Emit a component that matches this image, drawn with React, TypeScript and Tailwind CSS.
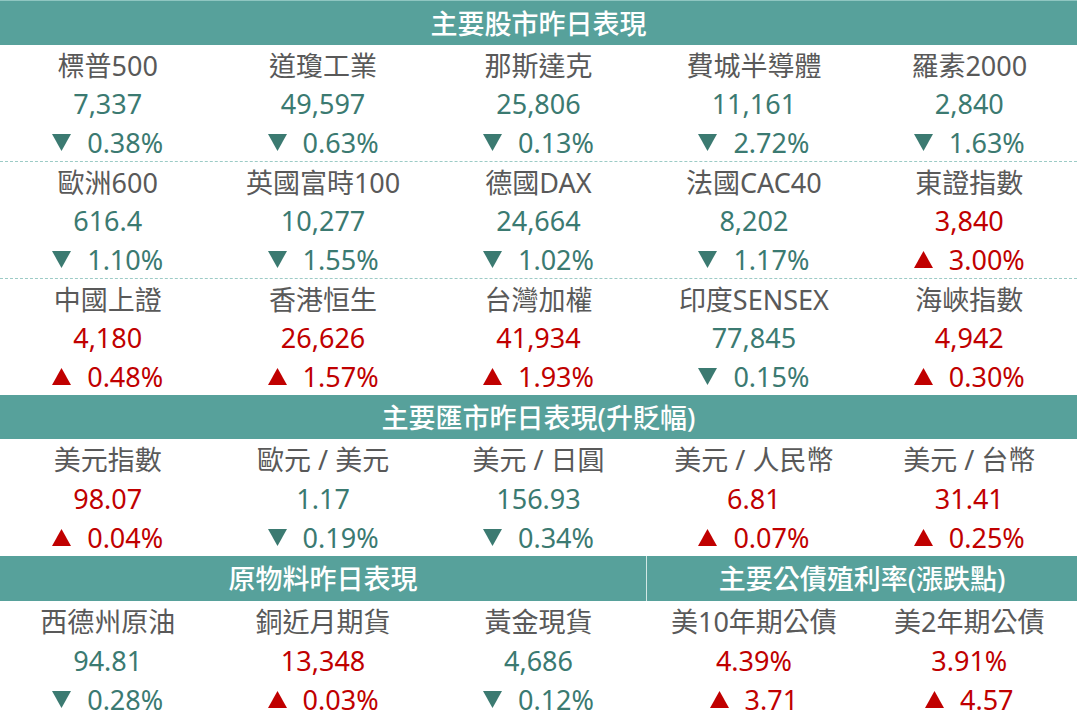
type Dir = 'up' | 'down';

interface Quote {
  name: string;
  value: string;
  change: string;
  dir: Dir;
}

const stockGroups: Quote[][] = [
  [
    { name: '標普500', value: '7,337', change: '0.38%', dir: 'down' },
    { name: '道瓊工業', value: '49,597', change: '0.63%', dir: 'down' },
    { name: '那斯達克', value: '25,806', change: '0.13%', dir: 'down' },
    { name: '費城半導體', value: '11,161', change: '2.72%', dir: 'down' },
    { name: '羅素2000', value: '2,840', change: '1.63%', dir: 'down' },
  ],
  [
    { name: '歐洲600', value: '616.4', change: '1.10%', dir: 'down' },
    { name: '英國富時100', value: '10,277', change: '1.55%', dir: 'down' },
    { name: '德國DAX', value: '24,664', change: '1.02%', dir: 'down' },
    { name: '法國CAC40', value: '8,202', change: '1.17%', dir: 'down' },
    { name: '東證指數', value: '3,840', change: '3.00%', dir: 'up' },
  ],
  [
    { name: '中國上證', value: '4,180', change: '0.48%', dir: 'up' },
    { name: '香港恒生', value: '26,626', change: '1.57%', dir: 'up' },
    { name: '台灣加權', value: '41,934', change: '1.93%', dir: 'up' },
    { name: '印度SENSEX', value: '77,845', change: '0.15%', dir: 'down' },
    { name: '海峽指數', value: '4,942', change: '0.30%', dir: 'up' },
  ],
];

const fxRow: Quote[] = [
  { name: '美元指數', value: '98.07', change: '0.04%', dir: 'up' },
  { name: '歐元 / 美元', value: '1.17', change: '0.19%', dir: 'down' },
  { name: '美元 / 日圓', value: '156.93', change: '0.34%', dir: 'down' },
  { name: '美元 / 人民幣', value: '6.81', change: '0.07%', dir: 'up' },
  { name: '美元 / 台幣', value: '31.41', change: '0.25%', dir: 'up' },
];

const lastRow: Quote[] = [
  { name: '西德州原油', value: '94.81', change: '0.28%', dir: 'down' },
  { name: '銅近月期貨', value: '13,348', change: '0.03%', dir: 'up' },
  { name: '黃金現貨', value: '4,686', change: '0.12%', dir: 'down' },
  { name: '美10年期公債', value: '4.39%', change: '3.71', dir: 'up' },
  { name: '美2年期公債', value: '3.91%', change: '4.57', dir: 'up' },
];

function Arrow({ dir }: { dir: Dir }) {
  return (
    <svg width="19" height="17" viewBox="0 0 19 17" className="mr-[16px] shrink-0">
      {dir === 'up' ? (
        <polygon points="9.5,0 19,17 0,17" fill="#c00000" />
      ) : (
        <polygon points="0,0 19,0 9.5,17" fill="#3b7a71" />
      )}
    </svg>
  );
}

function Cell({ q }: { q: Quote }) {
  const color = q.dir === 'up' ? 'text-[#c00000]' : 'text-[#3b7a71]';
  return (
    <div className="flex flex-col h-full">
      <div className="flex-1 flex items-center justify-center pt-[2px] text-[#595959]">{q.name}</div>
      <div className={`flex-1 flex items-center justify-center pt-[2px] ${color}`}>{q.value}</div>
      <div className={`flex-1 flex items-center justify-center pt-[3px] ${color}`}>
        <Arrow dir={q.dir} />
        <span>{q.change}</span>
      </div>
    </div>
  );
}

function Header({ title, className = '' }: { title: string; className?: string }) {
  return (
    <div className={`bg-[#57a19b] text-white font-medium flex items-center justify-center ${className}`}>
      {title}
    </div>
  );
}

export default function App() {
  return (
    <div
      className="w-[1077px] h-[718px] bg-white overflow-hidden text-[27px] leading-none"
      style={{ fontFamily: '"Noto Sans", "Noto Sans CJK TC", sans-serif' }}
    >
      <Header title="主要股市昨日表現" className="h-[45px] border-t border-[#8fc6c1]" />
      {stockGroups.map((group, gi) => (
        <div
          key={gi}
          className={`grid grid-cols-5 h-[116px] ${gi < 2 ? 'border-b border-dashed border-[#9ccbc6]' : ''} box-content`}
        >
          {group.map((q) => (
            <Cell key={q.name} q={q} />
          ))}
        </div>
      ))}

      <Header title="主要匯市昨日表現(升貶幅)" className="h-[44px]" />
      <div className="grid grid-cols-5 h-[117px]">
        {fxRow.map((q) => (
          <Cell key={q.name} q={q} />
        ))}
      </div>

      <div className="grid grid-cols-5 h-[45px]">
        <Header title="原物料昨日表現" className="col-span-3" />
        <Header title="主要公債殖利率(漲跌點)" className="col-span-2 border-l border-[#d2e8e5]" />
      </div>
      <div className="grid grid-cols-5 h-[117px]">
        {lastRow.map((q) => (
          <Cell key={q.name} q={q} />
        ))}
      </div>
    </div>
  );
}
